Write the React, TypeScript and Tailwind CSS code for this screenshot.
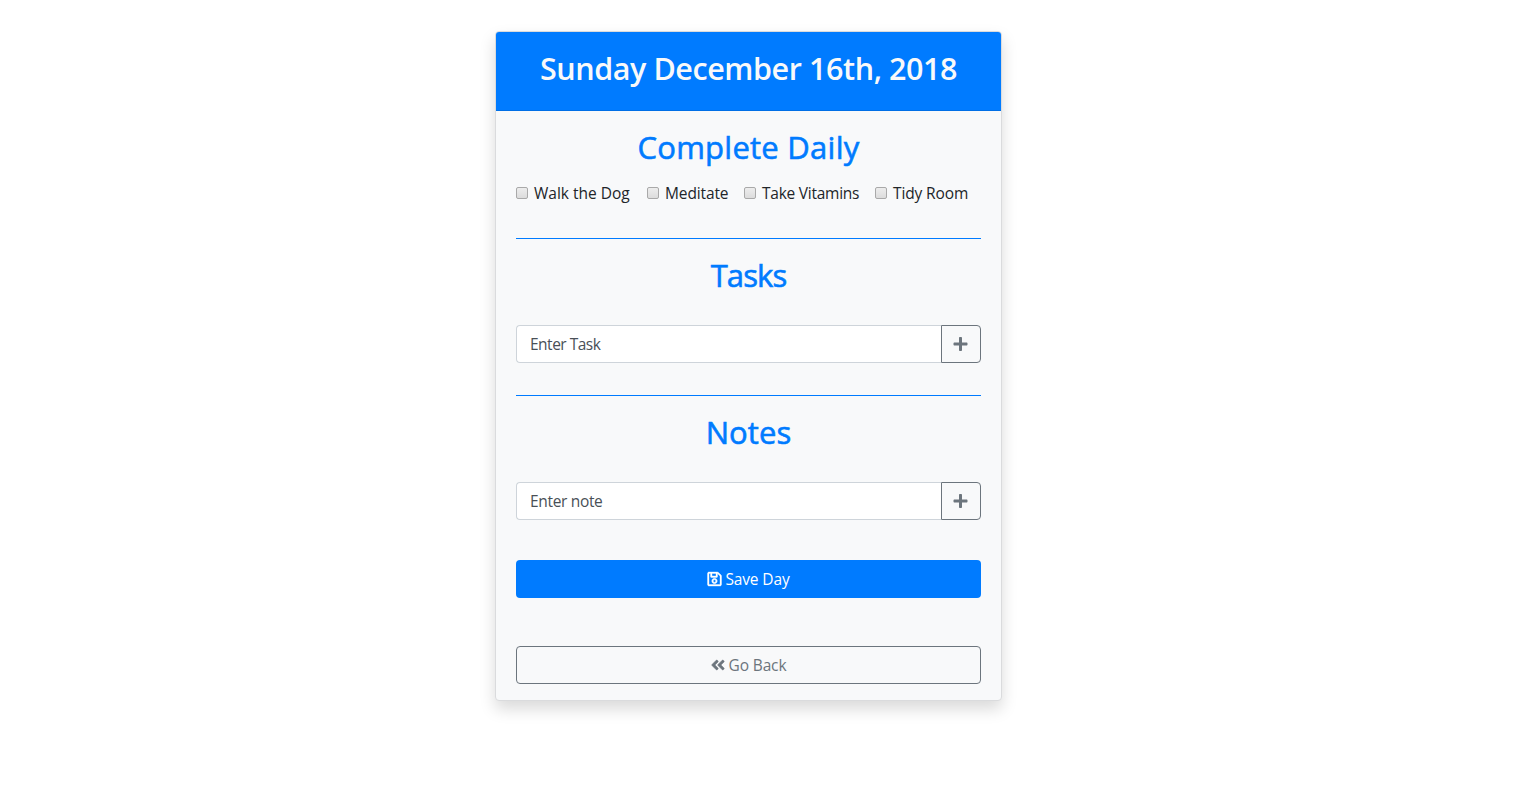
import { FaAngleDoubleLeft, FaPlus, FaRegSave } from "react-icons/fa";

const DAILY = [
  { label: "Walk the Dog", width: "w-[131px]", tracking: "tracking-[0px]" },
  { label: "Meditate", width: "w-[97px]", tracking: "tracking-[-0.12px]" },
  { label: "Take Vitamins", width: "w-[131px]", tracking: "tracking-[-0.25px]" },
  { label: "Tidy Room", width: "w-[94px]", tracking: "tracking-[-0.13px]" },
];

function Heading({ children, tracking }: { children: string; tracking: string }) {
  return (
    <h2 className={`h-[38px] whitespace-nowrap text-center text-[31px] font-medium leading-[38px] text-[#007bff] [-webkit-text-stroke:0.6px_#007bff] ${tracking}`}>
      {children}
    </h2>
  );
}

function EntryRow({ placeholder, tracking }: { placeholder: string; tracking: string }) {
  return (
    <div className="flex h-[38px]">
      <input
        type="text"
        placeholder={placeholder}
        className={`min-w-0 flex-1 rounded-l border border-r-0 border-[#ced4da] bg-white pl-[13px] pt-[2px] text-[15.5px] outline-none placeholder:text-[#495057] ${tracking}`}
      />
      <button className="flex w-10 items-center justify-center rounded-r border border-[#6c757d] pr-px text-[16px] text-[#6c757d]">
        <FaPlus className="h-4 w-[15px]" />
      </button>
    </div>
  );
}

export default function App() {
  return (
    <main className="flex h-[808px] bg-white pl-[495px] pt-[31px] font-['Open_Sans',sans-serif] text-[#212529]">
      <section className="flex h-[670px] w-[507px] flex-col rounded border border-[#dadbdd] bg-[#f8f9fa] shadow-[0_8px_16px_rgba(0,0,0,0.15)]">
        <header className="h-[79px] rounded-t-[3px] border-b border-[#006fe6] bg-[#007bff] pt-[17px]">
          <h2 className="whitespace-nowrap text-center text-[30.5px] font-semibold leading-[38px] tracking-[-0.42px] text-[#f8f9fa]">
            Sunday December 16th, 2018
          </h2>
        </header>
        <div className="flex flex-col px-5 pt-[17px]">
          <Heading tracking="tracking-[0.25px]">Complete Daily</Heading>
          <div className="mt-4 flex h-6 items-center">
            {DAILY.map((item) => (
              <label key={item.label} className={`flex items-center gap-[6px] whitespace-nowrap text-[15.5px] ${item.width} ${item.tracking}`}>
                <input
                  type="checkbox"
                  className="mb-[2px] size-3 shrink-0 appearance-none rounded-[2px] border border-[#a9a9a9] bg-linear-to-b from-[#ededed] to-[#dcdcdc]"
                />
                <span className="pb-[2px] leading-[22px]">{item.label}</span>
              </label>
            ))}
          </div>
          <hr className="mt-[32px] border-[#007bff]" />
          <div className="mt-[17px]">
            <Heading tracking="tracking-[-0.9px]">Tasks</Heading>
          </div>
          <div className="mt-[31px]">
            <EntryRow placeholder="Enter Task" tracking="tracking-[-0.5px]" />
          </div>
          <hr className="mt-8 border-[#007bff]" />
          <div className="mt-[17px]">
            <Heading tracking="tracking-[0.1px]">Notes</Heading>
          </div>
          <div className="mt-[31px]">
            <EntryRow placeholder="Enter note" tracking="tracking-[-0.33px]" />
          </div>
          <button className="mt-10 flex h-[38px] items-center justify-center gap-[3px] rounded bg-[#007bff] text-[15.5px] tracking-[-0.12px] text-white">
            <FaRegSave className="h-4 w-[15px] stroke-white stroke-[12]" />
            <span className="pt-[2px]">Save Day</span>
          </button>
          <button className="mt-12 flex h-[38px] items-center justify-center gap-1 rounded border border-[#6c757d] text-[15.5px] tracking-[-0.15px] text-[#6c757d]">
            <FaAngleDoubleLeft className="h-4 w-[14px] stroke-[#6c757d] stroke-[16]" />
            <span className="pt-[2px]">Go Back</span>
          </button>
        </div>
      </section>
    </main>
  );
}
